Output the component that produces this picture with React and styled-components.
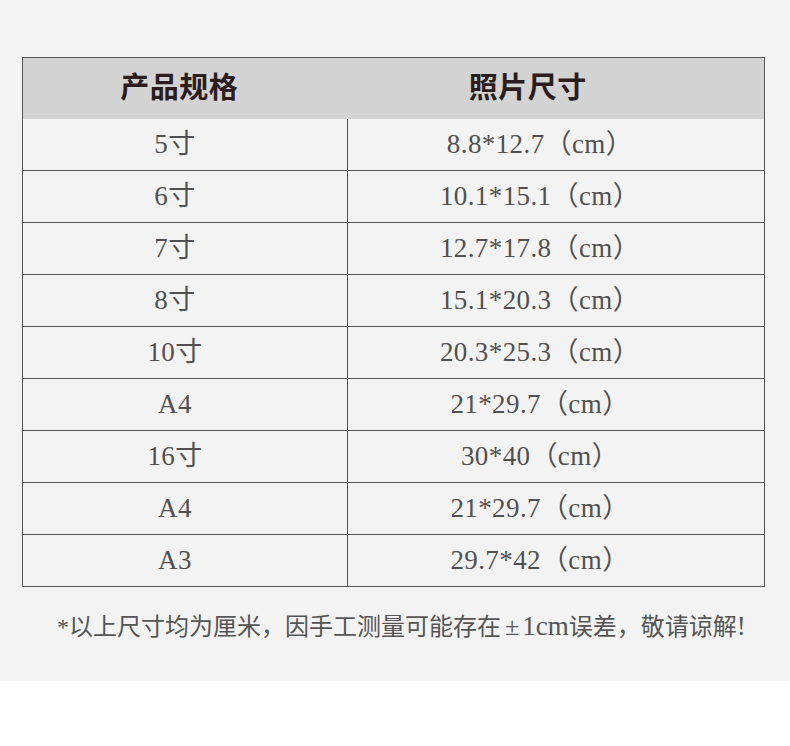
import React from "react";
import styled, { createGlobalStyle } from "styled-components";

const Global = createGlobalStyle`
  html, body { margin: 0; padding: 0; background: #ffffff; }
  body { font-family: "Liberation Serif", "Noto Sans CJK SC", serif; }
`;

const Page = styled.div`
  background: #f3f3f3;
  height: 681px;
  padding-top: 57px;
  box-sizing: border-box;
`;

const Table = styled.table`
  margin-left: 22px;
  width: 743px;
  border-collapse: collapse;
  border: 1px solid #555;
  table-layout: fixed;
`;

const HeadCell = styled.th`
  height: 61px;
  box-sizing: border-box;
  padding: 0 ${(p) => p.$shift}px 5px 0;
  background: #d3d3d3;
  color: #2b1d1d;
  font-family: "Noto Sans CJK SC", sans-serif;
  font-weight: 700;
  font-size: 29px;
  line-height: 1;
  text-align: center;
  vertical-align: middle;
  letter-spacing: 0.5px;
`;

const Cell = styled.td`
  height: 51px;
  padding: 0 ${(p) => p.$shift}px 0 0;
  border-top: ${(p) => (p.$first ? "none" : "1px solid #555")};
  border-left: ${(p) => (p.$divider ? "1px solid #555" : "none")};
  color: #505050;
  font-family: "Liberation Serif", "Noto Sans CJK SC", serif;
  font-size: 27px;
  letter-spacing: 0.4px;
  text-align: center;
  vertical-align: middle;
  line-height: 1;
`;

const Note = styled.p`
  margin: 24px 0 0;
  padding-left: 57px;
  color: #555;
  font-family: "Liberation Serif", "Noto Sans CJK SC", serif;
  font-size: 24px;
  line-height: 30px;
  white-space: nowrap;
`;

const Latin = styled.span`
  font-family: "Liberation Serif", serif;
  font-size: 27px;
`;

const Sign = styled.span`
  font-family: "Liberation Serif", serif;
  font-size: 26px;
  margin: 0 3px 0 4px;
`;

const rows = [
  ["5寸", "8.8*12.7（cm）"],
  ["6寸", "10.1*15.1（cm）"],
  ["7寸", "12.7*17.8（cm）"],
  ["8寸", "15.1*20.3（cm）"],
  ["10寸", "20.3*25.3（cm）"],
  ["A4", "21*29.7（cm）"],
  ["16寸", "30*40（cm）"],
  ["A4", "21*29.7（cm）"],
  ["A3", "29.7*42（cm）"],
];

export default function App() {
  return (
    <>
      <Global />
      <Page>
        <Table>
          <colgroup>
            <col style={{ width: "325px" }} />
            <col />
          </colgroup>
          <thead>
            <tr>
              <HeadCell $shift={12}>产品规格</HeadCell>
              <HeadCell $shift={56}>照片尺寸</HeadCell>
            </tr>
          </thead>
          <tbody>
            {rows.map(([a, b], i) => (
              <tr key={i}>
                <Cell $first={i === 0} $shift={20}>{a}</Cell>
                <Cell $first={i === 0} $divider $shift={32}>{b}</Cell>
              </tr>
            ))}
          </tbody>
        </Table>
        <Note>
          *以上尺寸均为厘米，因手工测量可能存在<Sign>±</Sign>
          <Latin>1cm</Latin>误差，敬请谅解<Latin>!</Latin>
        </Note>
      </Page>
    </>
  );
}
